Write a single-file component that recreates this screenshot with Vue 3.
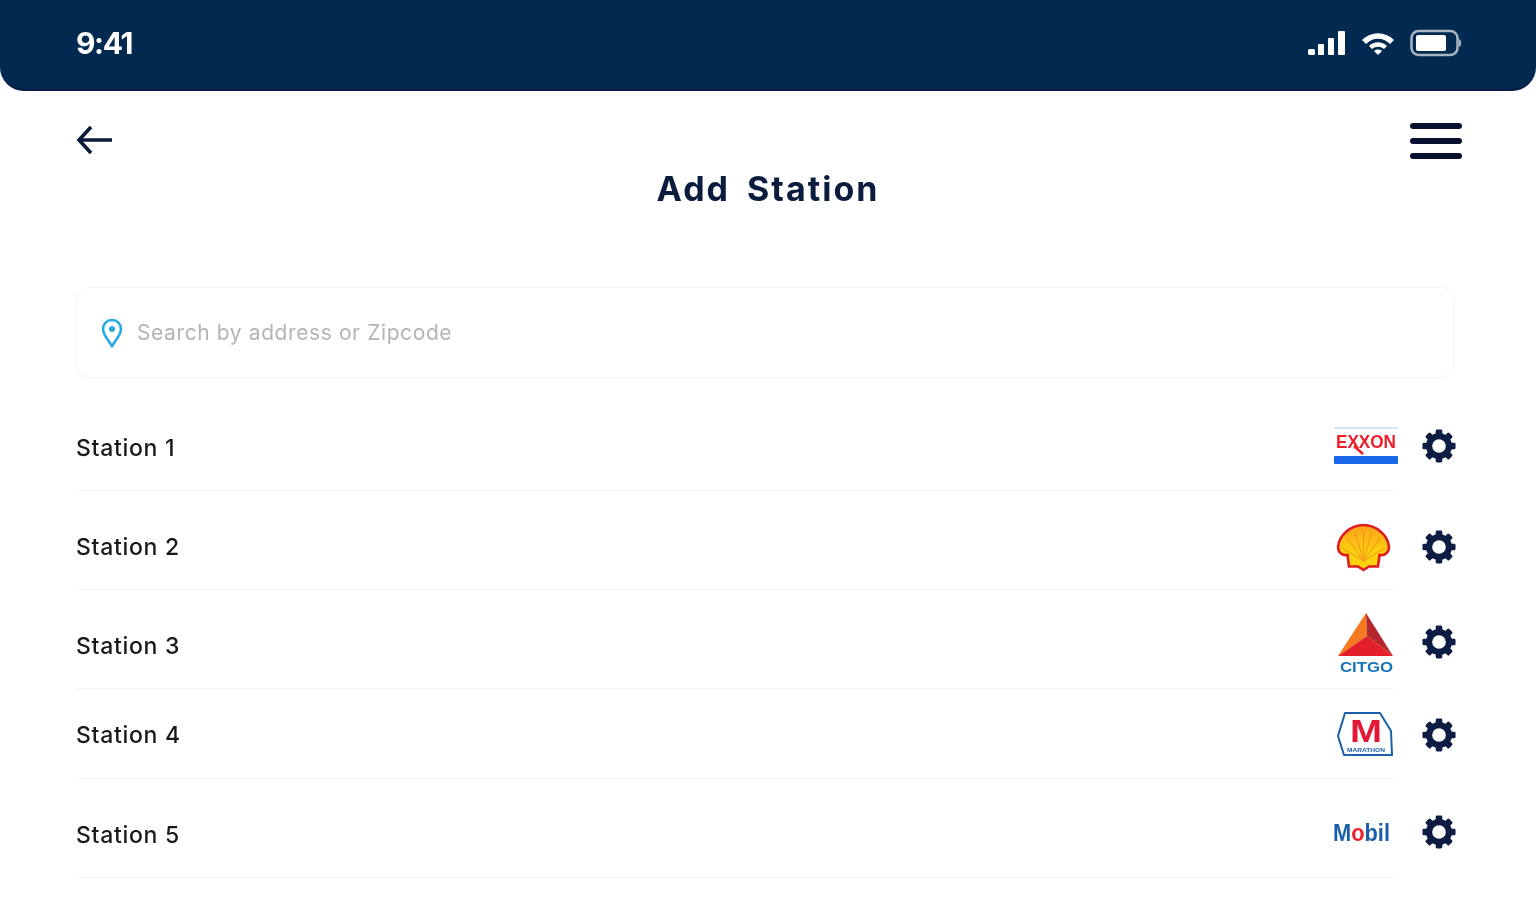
<script setup>
const stations = [
  { id: 1, name: 'Station 1', logo: 'exxon', gearTop: 8 },
  { id: 2, name: 'Station 2', logo: 'shell', gearTop: 12 },
  { id: 3, name: 'Station 3', logo: 'citgo', gearTop: 4 },
  { id: 4, name: 'Station 4', logo: 'marathon', gearTop: 2, short: true },
  { id: 5, name: 'Station 5', logo: 'mobil', gearTop: 6 }
]

const teeth = [0, 45, 90, 135, 180, 225, 270, 315]
</script>

<template>
  <div class="screen">
    <header class="status-bar">
      <span class="time">9:41</span>
      <div class="status-icons">
        <svg width="40" height="26" viewBox="0 0 40 26">
          <rect x="2" y="19" width="7" height="6" rx="1.5" fill="#fff" />
          <rect x="12" y="14" width="6" height="11" rx="1" fill="#fff" />
          <rect x="22" y="8" width="6" height="17" rx="1" fill="#fff" />
          <rect x="32" y="1" width="7" height="24" rx="1" fill="#fff" />
        </svg>
        <svg width="36" height="26" viewBox="0 0 36 26">
          <path d="M2 10C11 1 25 1 34 10L30 14C23 7 13 7 6 14Z" fill="#fff" />
          <path d="M9 16C14 11 22 11 27 16L24 19C20 16 16 16 12 19Z" fill="#fff" />
          <path d="M14 21C16 19 20 19 22 21L18 25Z" fill="#fff" />
        </svg>
        <svg width="52" height="28" viewBox="0 0 52 28">
          <rect x="1.5" y="2" width="46" height="24" rx="7" fill="none" stroke="#a9b5c0" stroke-width="2.5" />
          <rect x="6" y="6" width="30" height="16" rx="2" fill="#fff" />
          <path d="M49 10C52 11 52 17 49 18Z" fill="#a9b5c0" />
        </svg>
      </div>
    </header>

    <div class="top-actions">
      <svg width="36" height="30" viewBox="0 0 36 30" fill="none" stroke="#0a1a3a" stroke-width="3.6">
        <path d="M36 15H3" />
        <path d="M15 2L3 15L15 28" />
      </svg>
      <div class="burger">
        <span></span>
        <span></span>
        <span></span>
      </div>
    </div>

    <h1 class="title">Add Station</h1>

    <div class="search">
      <svg width="22" height="30" viewBox="0 0 22 30">
        <path d="M11 2C5.8 2 2 6 2 11C2 17 8 23 11 28C14 23 20 17 20 11C20 6 16.2 2 11 2Z" fill="none" stroke="#29abe2" stroke-width="2.6" />
        <circle cx="11" cy="11" r="3" fill="#29abe2" />
      </svg>
      <span class="placeholder">Search by address or Zipcode</span>
    </div>

    <ul class="stations">
      <li v-for="station in stations" :key="station.id" class="station">
        <div :class="['station-main', station.short ? 'short' : '']">
          <span class="station-name">{{ station.name }}</span>
          <svg class="logo" width="70" height="80" viewBox="0 0 70 80">
            <g v-if="station.logo === 'exxon'">
              <rect x="4" y="19" width="64" height="2" fill="#d6e4f8" />
              <text x="6" y="40" class="logo-text" font-size="18" fill="#ee1c25" textLength="60" lengthAdjust="spacingAndGlyphs">EXXON</text>
              <path d="M24 38L33 46" stroke="#ee1c25" stroke-width="2.5" />
              <rect x="4" y="48" width="64" height="8" rx="1" fill="#1a66e8" />
            </g>
            <g v-else-if="station.logo === 'shell'">
              <defs>
                <linearGradient id="shell-fill" x1="0" y1="0" x2="0" y2="1">
                  <stop offset="0" stop-color="#f9a11b" />
                  <stop offset="0.6" stop-color="#fdd20e" />
                </linearGradient>
              </defs>
              <path d="M33.5 18C46 18 58 28 59 40C59 45 55 49 49.5 48L48 59.5H39L33.5 63L28 59.5H19L17.5 48C12 49 8 45 8 40C9 28 21 18 33.5 18Z" fill="url(#shell-fill)" stroke="#dd1d21" stroke-width="2.6" />
              <path d="M33.5 54V24M33.5 54L25 25M33.5 54L42 25M33.5 54L17 31M33.5 54L50 31M33.5 54L12 41M33.5 54L55 41" stroke="#f08a1c" stroke-width="1.2" fill="none" opacity="0.7" />
            </g>
            <g v-else-if="station.logo === 'citgo'">
              <polygon points="36,7 8,50 37,30" fill="#f47b20" />
              <polygon points="36,7 63,50 37,30" fill="#b5282e" />
              <polygon points="8,50 63,50 37,30" fill="#e3202a" />
              <text x="10" y="66" class="logo-text" font-size="15" fill="#1a75bc" textLength="53" lengthAdjust="spacingAndGlyphs">CITGO</text>
            </g>
            <g v-else-if="station.logo === 'marathon'">
              <path d="M15 18H50L61 36L62 60H14L8 41Z" fill="#fff" stroke="#1b5faa" stroke-width="2" stroke-linejoin="round" />
              <text x="20" y="47" class="logo-text" font-size="31" fill="#e31837" textLength="32" lengthAdjust="spacingAndGlyphs">M</text>
              <text x="17" y="57" class="logo-text" font-size="5" fill="#1b5faa" textLength="38" lengthAdjust="spacingAndGlyphs">MARATHON</text>
            </g>
            <g v-else>
              <text x="3" y="46" class="logo-text" font-size="24" fill="#1c5fa8" textLength="57" lengthAdjust="spacingAndGlyphs">M<tspan fill="#e8202a">o</tspan>bil</text>
            </g>
          </svg>
        </div>
        <svg class="gear" :style="{ marginTop: station.gearTop + 'px' }" width="34" height="34" viewBox="-18 -18 36 36">
          <circle r="10.5" fill="none" stroke="#0c1c42" stroke-width="6.5" />
          <rect v-for="deg in teeth" :key="deg" x="-3.5" y="-17.5" width="7" height="6" rx="1.5" fill="#0c1c42" :transform="`rotate(${deg})`" />
        </svg>
      </li>
    </ul>
  </div>
</template>

<style scoped>
.screen {
  width: 1536px;
  height: 900px;
  overflow: hidden;
  background: #fff;
  font-family: Inter, "Liberation Sans", sans-serif;
  filter: blur(0.6px);
}

.status-bar {
  height: 91px;
  padding: 0 74px 3px 76px;
  box-sizing: border-box;
  background: #02294f;
  border-radius: 0 0 24px 24px;
  border-bottom: 2px solid #0b1a4a;
  display: flex;
  align-items: center;
  justify-content: space-between;
}

.time {
  color: #fff;
  font-size: 30px;
  font-weight: 700;
  letter-spacing: -1.4px;
}

.status-icons {
  display: flex;
  align-items: center;
  gap: 14px;
}

.top-actions {
  display: flex;
  justify-content: space-between;
  align-items: center;
  padding: 30px 74px 0 76px;
}

.burger {
  width: 52px;
  margin-top: 2px;
  display: flex;
  flex-direction: column;
  gap: 9px;
}

.burger span {
  height: 6px;
  border-radius: 3px;
  background: #0a1030;
}

.title {
  margin: 10px 0 0;
  text-align: center;
  color: #0b1c3f;
  font-size: 34px;
  line-height: 40px;
  font-weight: 700;
  word-spacing: 7px;
  letter-spacing: 2px;
}

.search {
  margin: 78px 0 0 76px;
  width: 1378px;
  height: 91px;
  box-sizing: border-box;
  padding-left: 24px;
  border: 1px solid #f5f5f5;
  border-radius: 14px;
  box-shadow: 0 1px 3px rgba(0, 0, 0, 0.03);
  display: flex;
  align-items: center;
  gap: 14px;
}

.placeholder {
  color: #b4b4b4;
  font-size: 21px;
  letter-spacing: 0.6px;
}

.stations {
  list-style: none;
  margin: 14px 0 0 76px;
  padding: 0;
}

.station {
  display: flex;
  align-items: center;
}

.station-main {
  width: 1318px;
  height: 99px;
  box-sizing: border-box;
  padding-top: 13px;
  border-bottom: 1px solid #f3f3f3;
  display: flex;
  align-items: center;
  justify-content: space-between;
}

.station-main.short {
  height: 90px;
  padding-top: 2px;
}

.station-name {
  color: #1a1a1a;
  font-size: 23px;
  font-weight: 500;
  letter-spacing: 0.7px;
}

.logo {
  margin-right: -6px;
}

.logo-text {
  font-family: "Liberation Sans", sans-serif;
  font-weight: 700;
}

.gear {
  margin-left: 28px;
  flex-shrink: 0;
}
</style>

<style>
html,
body {
  background: #fff;
}
</style>
